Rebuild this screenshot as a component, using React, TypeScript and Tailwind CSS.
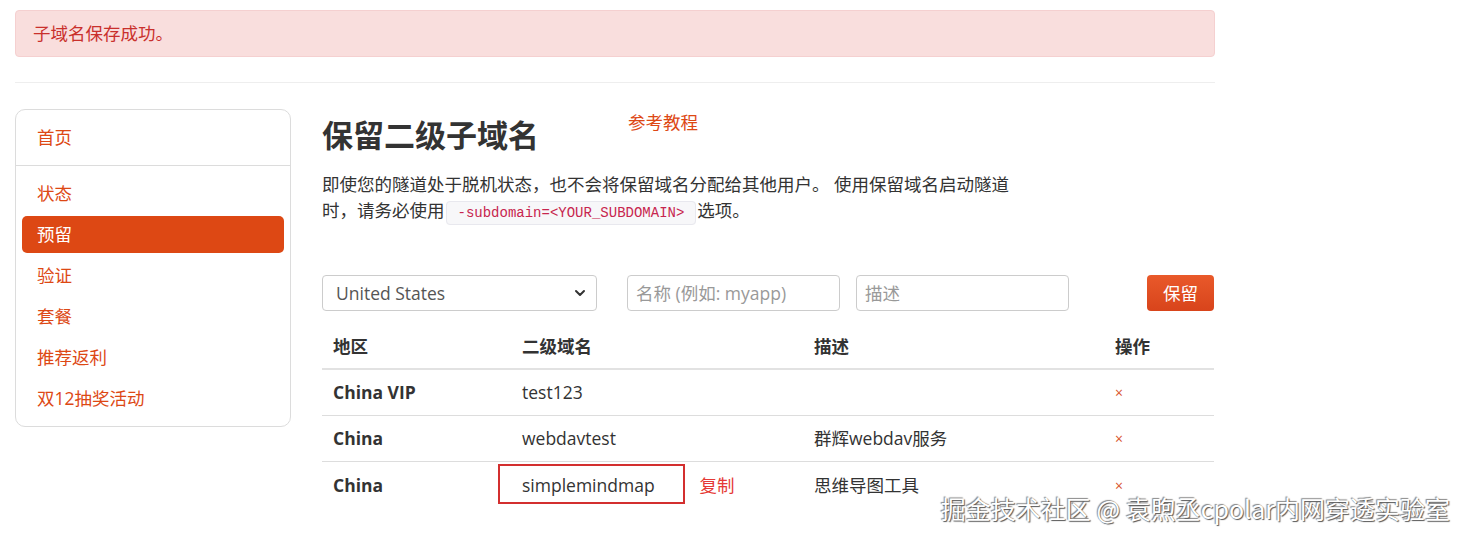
import React from 'react';

const FONT = "font-['Open_Sans','Noto_Sans_CJK_SC',sans-serif]";

const navItems = ['状态', '预留', '验证', '套餐', '推荐返利', '双12抽奖活动'];

interface Row {
  region: string;
  sub: string;
  desc: string;
  marked?: boolean;
}

const rows: Row[] = [
  { region: 'China VIP', sub: 'test123', desc: '' },
  { region: 'China', sub: 'webdavtest', desc: '群辉webdav服务' },
  { region: 'China', sub: 'simplemindmap', desc: '思维导图工具', marked: true },
];

const Sidebar: React.FC = () => (
  <div className="w-[276px] border border-[#dcdcdc] rounded-[10px] shrink-0 self-start">
    <div className="px-[6px] py-[9px] border-b border-[#dcdcdc]">
      <div className="h-[37px] flex items-center px-[15px] text-[#dd4814]">首页</div>
    </div>
    <div className="px-[6px] py-[9px] flex flex-col gap-[4px]">
      {navItems.map(item => (
        <div
          key={item}
          className={`h-[37px] flex items-center px-[15px] rounded-[5px] ${item === '预留' ? 'bg-[#dd4814] text-white' : 'text-[#dd4814]'}`}
        >
          {item}
        </div>
      ))}
    </div>
  </div>
);

const App: React.FC = () => {
  return (
    <div className={`${FONT} text-[17.5px] text-[#333] bg-white w-[1468px] h-[542px] relative overflow-hidden`}>
      <div className="w-[1200px] ml-[15px] pt-[10px]">
        {/* alert */}
        <div className="h-[47px] flex items-center px-[17px] bg-[#f9dedd] border border-[#f5d0d0] rounded-[4px] text-[#c9302c]">
          子域名保存成功。
        </div>
        <div className="mt-[25px] border-t border-[#eeeeee]" />

        <div className="flex items-start mt-[26px] gap-[31px]">
          <Sidebar />

          <div className="w-[893px]">
            <div className="flex items-start">
              <h1 className="text-[31px] font-bold leading-[36px] mt-[8px] text-[#333]">保留二级子域名</h1>
              <a className="ml-[89px] text-[#dd4814] leading-[26px]">参考教程</a>
            </div>

            <p className="mt-[18px] w-[700px] leading-[26px]">
              即使您的隧道处于脱机状态，也不会将保留域名分配给其他用户。 使用保留域名启动隧道时，请务必使用
              <code className="font-['Liberation_Mono',monospace] text-[14px] leading-[16px] text-[#c7254e] bg-[#f7f7f9] border border-[#e8e8ee] rounded-[4px] px-[11px] py-[3px] mx-[1px]">
                -subdomain=&lt;YOUR_SUBDOMAIN&gt;
              </code>
              选项。
            </p>

            {/* form */}
            <div className="flex items-center mt-[52px] h-[36px]">
              <div className="w-[275px] h-[36px] border border-[#cccccc] rounded-[4px] flex items-center justify-between pl-[13px] pr-[10px] text-[#555]">
                <span>United States</span>
                <svg width="12" height="12" viewBox="0 0 12 12" fill="none">
                  <path d="M2 4l4 4 4-4" stroke="#333" strokeWidth="2" strokeLinecap="round" strokeLinejoin="round" />
                </svg>
              </div>
              <div className="ml-[30px] w-[213px] h-[36px] border border-[#cccccc] rounded-[4px] flex items-center px-[8px] text-[#999]">
                名称 (例如: myapp)
              </div>
              <div className="ml-[16px] w-[213px] h-[36px] border border-[#cccccc] rounded-[4px] flex items-center px-[8px] text-[#999]">
                描述
              </div>
              <button className="ml-[78px] w-[67px] h-[36px] rounded-[4px] text-white bg-gradient-to-b from-[#e9592a] to-[#d8441b]">
                保留
              </button>
            </div>

            {/* table */}
            <div className="mt-[13px] w-[892px]">
              <div className="grid grid-cols-[189px_292px_301px_110px] h-[46px] items-center border-b-2 border-[#e2e2e2] font-bold">
                <div className="px-[11px]">地区</div>
                <div className="px-[11px]">二级域名</div>
                <div className="px-[11px]">描述</div>
                <div className="px-[11px]">操作</div>
              </div>
              {rows.map((r, i) => (
                <div
                  key={r.sub}
                  className={`grid grid-cols-[189px_292px_301px_110px] h-[46px] items-center ${i < rows.length - 1 ? 'border-b border-[#dddddd]' : ''}`}
                >
                  <div className="px-[11px] font-bold">{r.region}</div>
                  <div className="px-[11px] flex items-center">
                    <span className="relative">
                      {r.sub}
                      {r.marked && (
                        <span className="absolute left-[-24px] top-[-8px] w-[187px] h-[40px] border-2 border-[#d32f2f]" />
                      )}
                    </span>
                    {r.marked && <span className="ml-[45px] text-[#e53935]">复制</span>}
                  </div>
                  <div className="px-[11px]">{r.desc}</div>
                  <div className="px-[11px] text-[#d9532c] text-[14px]">×</div>
                </div>
              ))}
            </div>
          </div>
        </div>
      </div>

      {/* watermark */}
      <div className="absolute right-[18px] top-[490px] text-[25px] text-white font-['Noto_Sans_CJK_SC',sans-serif] [text-shadow:1px_1px_1px_#555,-1px_-1px_1px_#888]">
        掘金技术社区 @ 袁煦丞cpolar内网穿透实验室
      </div>
    </div>
  );
};

export default App;
